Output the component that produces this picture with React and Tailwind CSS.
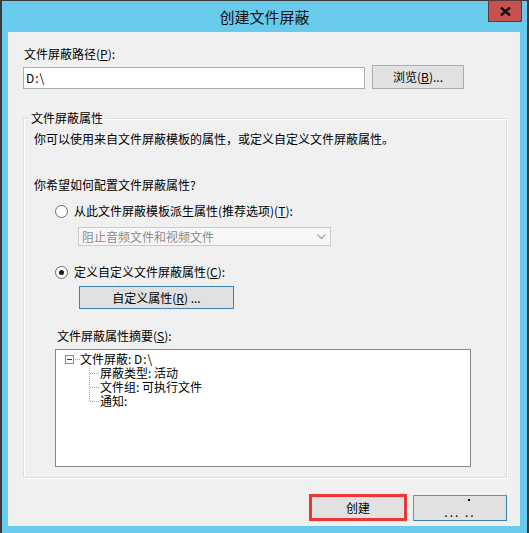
const font = { fontFamily: '"Noto Sans CJK SC", "Liberation Sans", sans-serif' };

function Acc({ children }) {
  return <span className="underline underline-offset-[1px]">{children}</span>;
}

function Radio({ checked }) {
  return (
    <span className="flex h-[13px] w-[13px] items-center justify-center rounded-full border border-[#6e6e6e] bg-white">
      {checked && <span className="h-[5px] w-[5px] rounded-full bg-[#1a1a1a]" />}
    </span>
  );
}

function TreeChild({ text, last }) {
  return (
    <div className="flex h-[14px] items-center">
      <svg width="20" height="14" className="ml-[24px] shrink-0">
        <line x1="9.5" y1="0" x2="9.5" y2={last ? 7 : 14} stroke="#a0a0a0" strokeDasharray="1 1" />
        <line x1="10" y1="7.5" x2="20" y2="7.5" stroke="#a0a0a0" strokeDasharray="1 1" />
      </svg>
      <span className="leading-[14px]">{text}</span>
    </div>
  );
}

export default function App() {
  return (
    <div
      className="flex h-[533px] w-[529px] flex-col border-x-2 border-t border-[#3a3a3a] bg-[#69cbeb] text-[12px] leading-[14px] text-black"
      style={font}
    >
      {/* title bar */}
      <div className="relative flex h-[31px] shrink-0 items-center justify-center">
        <span className="text-[15px] leading-[18px] text-[#111]">创建文件屏蔽</span>
        <div className="absolute right-[5px] top-[-1px] flex h-[22px] w-[34px] items-center justify-center border border-[#5a3a3a] bg-[#c75050]">
          <svg width="11" height="9" viewBox="0 0 11 9">
            <path d="M1 0.5 L10 8.5 M10 0.5 L1 8.5" stroke="#111" strokeWidth="2.4" />
          </svg>
        </div>
      </div>

      {/* client area */}
      <div className="ml-[6px] flex h-[494px] w-[512px] flex-col bg-[#f0f0f0] pl-[15px] pr-[13px] pt-[15px]">
        <div className="ml-[1px]">
          文件屏蔽路径(<Acc>P</Acc>):
        </div>
        <div className="mt-[4px] flex items-end">
          <div className="flex h-[22px] w-[342px] items-center border border-[#abadb3] bg-white pl-[2px] tracking-[1px]">D:\</div>
          <button className="ml-[7px] flex h-[24px] w-[92px] items-center justify-center border border-[#adadad] bg-[#e1e1e1]">
            浏览(<Acc>B</Acc>)...
          </button>
        </div>

        {/* group box */}
        <div className="mt-[29px] flex h-[360px] w-[484px] flex-col border border-[#d5dfe5] shadow-[inset_1px_1px_0_#ffffff,1px_1px_0_#ffffff]">
          <span className="-mt-[8px] ml-[4px] self-start bg-[#f0f0f0] px-[3px]">文件屏蔽属性</span>
          <div className="ml-[10px] mt-[7px]">你可以使用来自文件屏蔽模板的属性，或定义自定义文件屏蔽属性。</div>
          <div className="ml-[10px] mt-[32px]">你希望如何配置文件屏蔽属性?</div>

          <div className="ml-[31px] mt-[12px] flex h-[14px] items-center gap-[6px]">
            <Radio />
            <span>
              从此文件屏蔽模板派生属性(推荐选项)(<Acc>T</Acc>):
            </span>
          </div>
          <div className="ml-[54px] mt-[9px] flex h-[19px] w-[253px] items-center justify-between border border-[#cacaca] bg-[#f7f7f7] pl-[3px] pr-[4px] text-[#8a8a8a]">
            <span>阻止音频文件和视频文件</span>
            <svg width="9" height="6" viewBox="0 0 9 6">
              <path d="M0.5 0.5 L4.5 4.5 L8.5 0.5" fill="none" stroke="#a8a8a8" strokeWidth="1.3" />
            </svg>
          </div>

          <div className="ml-[31px] mt-[19px] flex h-[14px] items-center gap-[6px]">
            <Radio checked />
            <span>
              定义自定义文件屏蔽属性(<Acc>C</Acc>):
            </span>
          </div>
          <button className="ml-[55px] mt-[7px] flex h-[23px] w-[155px] items-center justify-center border border-[#3c7fb1] bg-[#e1e1e1]">
            自定义属性(<Acc>R</Acc>) ...
          </button>

          <div className="ml-[33px] mt-[20px]">
            文件屏蔽属性摘要(<Acc>S</Acc>):
          </div>
          <div className="ml-[31px] mt-[6px] h-[118px] w-[416px] border border-[#828790] bg-white pt-[2px]">
            <div className="flex h-[14px] items-center">
              <svg width="15" height="14" className="ml-[9px] shrink-0">
                <rect x="0.5" y="3.5" width="8" height="8" fill="#fff" stroke="#8a8a8a" />
                <line x1="2" y1="7.5" x2="7" y2="7.5" stroke="#333" />
                <line x1="10" y1="7.5" x2="15" y2="7.5" stroke="#a0a0a0" strokeDasharray="1 1" />
              </svg>
              <span className="leading-[14px]">
                文件屏蔽: <span className="tracking-[1px]">D:\</span>
              </span>
            </div>
            <TreeChild text="屏蔽类型: 活动" />
            <TreeChild text="文件组: 可执行文件" />
            <TreeChild text="通知:" last />
          </div>
        </div>

        {/* bottom buttons */}
        <div className="mt-[16px] flex items-start justify-end gap-[6px]">
          <div className="h-[27px] w-[98px] border-[3px] border-[#f03434]">
            <button className="flex h-full w-full items-center justify-center bg-[#e1e1e1]">创建</button>
          </div>
          <button className="mt-[1px] flex h-[26px] w-[94px] flex-col items-center justify-end border border-[#8a8a8a] border-b-[#3c7fb1] border-r-[#3c7fb1] bg-[#e1e1e1] pb-[3px]">
            <span className="mb-[6px] ml-[18px] h-[2px] w-[2px] bg-black" />
            <span className="leading-[10px] tracking-[2px]">... ..</span>
          </button>
        </div>
      </div>
    </div>
  );
}
